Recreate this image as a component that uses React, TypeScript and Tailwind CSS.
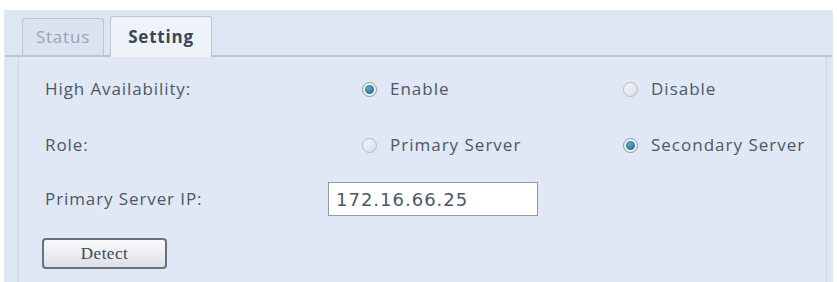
import { useState } from "react";

function Radio({ checked, label, onClick }: { checked: boolean; label: string; onClick: () => void }) {
  return (
    <button type="button" onClick={onClick} className="flex items-center gap-[13px] text-[17px] tracking-[1px] text-[#4d5766]">
      <span
        className={
          "flex h-[15px] w-[15px] items-center justify-center rounded-full border " +
          (checked ? "border-[#8a97a8] bg-[#eef2f7]" : "border-[#b3bcc8] bg-gradient-to-br from-[#f6f7f9] to-[#d9dee5]")
        }
      >
        {checked && <span className="h-[9px] w-[9px] rounded-full bg-[radial-gradient(circle_at_40%_35%,#5aa9c9,#1e5f86)]" />}
      </span>
      {label}
    </button>
  );
}

export default function App() {
  const [tab, setTab] = useState("Setting");
  const [ha, setHa] = useState("enable");
  const [role, setRole] = useState("secondary");
  const [ip, setIp] = useState("172.16.66.25");

  return (
    <div className="h-[282px] w-[837px] bg-white px-[4px] pt-[10px] font-['Open_Sans','Liberation_Sans',sans-serif]">
      <div className="flex h-full flex-col border-l border-r border-t border-[#e3e8ef] bg-[#dde6f3]">
        <div className="flex h-[46px] items-end gap-[6px] border-b-2 border-[#b9c6d8] pl-[17px]">
          {["Status", "Setting"].map((t) => (
            <button
              key={t}
              type="button"
              onClick={() => setTab(t)}
              className={
                "rounded-t-[3px] border border-b-0 border-[#b9c6d6] text-[17px] tracking-[0.8px] " +
                (tab === t
                  ? "mb-[-2px] h-[41px] w-[102px] bg-[#eef3fa] font-bold text-[#3b4656]"
                  : "h-[37px] w-[82px] bg-[#dae3f0] text-[#9aa4b1]")
              }
            >
              {t}
            </button>
          ))}
        </div>
        <div className="ml-[13px] mr-[5px] flex flex-1 flex-col border-l border-r border-[#cdd6e3] bg-[#dfe8f4] pl-[26px] pt-[4px] text-[17px] tracking-[0.9px] text-[#4d5766]">
          <div className="grid h-[56px] grid-cols-[317px_261px_1fr] items-center">
            <span>High Availability:</span>
            <Radio checked={ha === "enable"} label="Enable" onClick={() => setHa("enable")} />
            <Radio checked={ha === "disable"} label="Disable" onClick={() => setHa("disable")} />
          </div>
          <div className="grid h-[56px] grid-cols-[317px_261px_1fr] items-center">
            <span>Role:</span>
            <Radio checked={role === "primary"} label="Primary Server" onClick={() => setRole("primary")} />
            <Radio checked={role === "secondary"} label="Secondary Server" onClick={() => setRole("secondary")} />
          </div>
          <div className="grid h-[52px] grid-cols-[283px_1fr] items-center">
            <span>Primary Server IP:</span>
            <input
              value={ip}
              onChange={(e) => setIp(e.target.value)}
              className="h-[34px] w-[210px] border border-[#8e99a8] bg-white px-[7px] font-['DejaVu_Sans',sans-serif] text-[18px] tracking-[1px] text-[#4d5766] outline-none"
            />
          </div>
          <div className="mt-[13px]">
            <button
              type="button"
              className="ml-[-3px] h-[31px] w-[125px] rounded-[4px] border-2 border-[#67727f] bg-gradient-to-b from-[#fbfbfc] to-[#dcdfe4] font-['Liberation_Serif',serif] text-[17px] tracking-[0.5px] text-[#3d4756]"
            >
              Detect
            </button>
          </div>
        </div>
      </div>
    </div>
  );
}
